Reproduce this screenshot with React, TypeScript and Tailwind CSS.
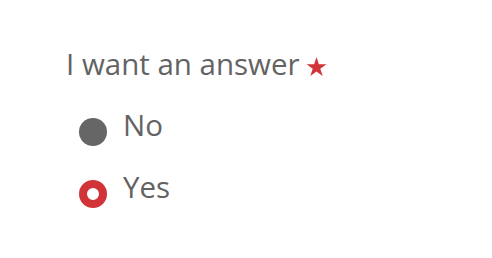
import React from "react";

export default function App() {
  return (
    <div className="h-[258px] w-[492px] bg-white pl-[66px] pt-[44px] font-['Open_Sans',sans-serif] text-[29.5px] leading-[40px] text-[#636363]">
      <div className="flex items-center gap-[6px]">
        <span>I want an answer</span>
        <svg width="21" height="19" viewBox="0 0 20 19" className="mt-[4px]">
          <polygon
            points="10,0 12.35,7.26 19.96,7.26 13.8,11.74 16.15,19 10,14.51 3.85,19 6.2,11.74 0.04,7.26 7.65,7.26"
            fill="#d13438"
          />
        </svg>
      </div>
      <div className="mt-[21px] flex flex-col gap-[21px] pl-[13px]">
        <label className="flex items-start gap-[16px]">
          <span className="mt-[13px] h-[28px] w-[28px] rounded-full bg-[#666666]" />
          <span>No</span>
        </label>
        <label className="flex items-start gap-[16px]">
          <span className="mt-[13px] h-[28px] w-[28px] rounded-full border-[8px] border-[#d13438] bg-white" />
          <span>Yes</span>
        </label>
      </div>
    </div>
  );
}
